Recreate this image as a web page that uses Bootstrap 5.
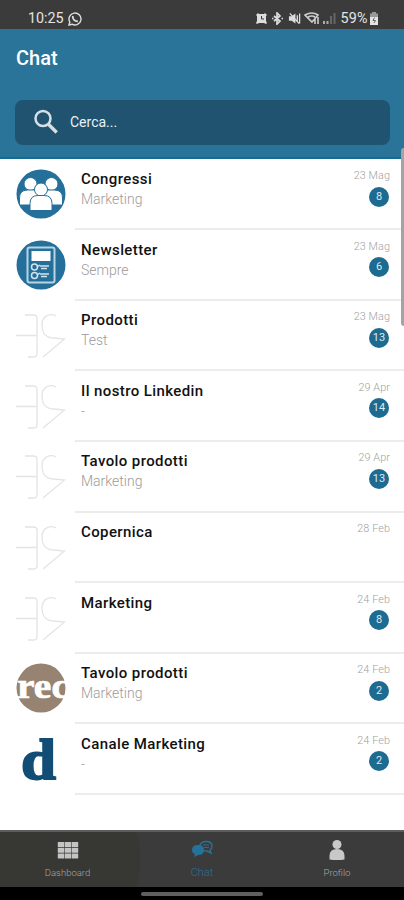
<!DOCTYPE html>
<html lang="it">
<head>
<meta charset="utf-8">
<meta name="viewport" content="width=device-width, initial-scale=1">
<title>Chat</title>
<link rel="stylesheet" href="https://cdn.jsdelivr.net/npm/bootstrap@5.3.0/dist/css/bootstrap.min.css">
<style>
body{font-family:Roboto,"Liberation Sans",sans-serif;width:404px;height:900px;overflow:hidden;background:#fff}
svg{display:block;flex:none}
.statusbar{height:29px;background:#3b3b3b;color:#e4e4e4;padding:8px 25px 0 28px;font-size:14.300px;line-height:20px}
.status-icons{gap:3.300px}
.pct{margin-left:1px;margin-right:-2px;letter-spacing:.2px}
.topbar{height:130.300px;background:#2b7499;border-bottom:2px solid #146b93;padding:15px 14px 0 15px}
.topbar h1{font-size:20px;line-height:28px;font-weight:500;color:#fff;margin:0 0 27.500px 1px}
.searchbox{height:45px;border-radius:8px;background:#1f5370;color:#e9f1f5;font-size:14px;padding-left:18px}
.searchbox span{margin-left:11px}
.chat-row{height:70.550px;padding-left:16px}
.avatar-pic{margin-top:10px}
.avatar-tall{margin-top:0}
.chat-body{margin-left:9px;padding:10px 14px 0 6px;border-bottom:2px solid #ececec;min-width:0;position:relative;top:.5px}
.chat-title{font-size:15px;line-height:20px;font-weight:500;color:#111;letter-spacing:.4px;margin-top:-.5px}
.chat-sub{font-size:14px;line-height:20px;font-weight:300;color:#9b9b9b}
.chat-date{font-size:10.800px;line-height:13px;font-weight:300;color:#9f9f9f;letter-spacing:.1px;margin-top:-.5px}
.count{width:20px;height:20px;border-radius:50%;background:#1d6b91;color:#dceaf2;font-size:11px;line-height:20px;margin:4.500px 1px 0 0}
.scroll-thumb{right:0;top:148px;width:3px;height:178px;border-radius:3px 0 0 3px;background:#a3a3a3}
.tabbar{height:57px;background:#3b3b3b;border-top:2px solid #5c5c5c;color:#a8a8a8;font-size:9.500px;font-weight:300}
.tab-item{padding-top:7px}
.tab-item.first{background:#373733;width:140px;padding-right:5px;border-radius:0 5px 5px 0/0 28px 28px 0}
.tab-item.mid{width:124px;color:#25739b;font-size:11px}
.tab-item.last{width:140px;padding-left:6px}
.tab-item span{line-height:14px;margin-top:5px}
.gesture{height:13px;background:#000}
.gesture div{width:122px;height:4px;border-radius:2px;background:#606060}
</style>
<script src="https://cdn.jsdelivr.net/npm/bootstrap@5.3.0/dist/js/bootstrap.bundle.min.js"></script>
</head>
<body class="d-flex flex-column position-relative">
<svg width="0" height="0" class="position-absolute"><defs>
<symbol id="mono" viewBox="0 0 50 50"><g fill="none" stroke="#e4e4e4" stroke-width="1.300"><path d="M9 5h8q4 0 4 3v36q0 3-4 3h-5M0 25.500h21M40 6C35 3 26 5 26 15C26 25 32 28 38 28L48.500 29 27 47"/></g></symbol>
<g id="person"><circle cy="-9" r="6.500"/><path d="M-11 12V5q0-8 8-8h6q8 0 8 8v7z"/></g>
</defs></svg>

<div class="statusbar d-flex justify-content-between">
<div class="d-flex gap-1"><span>10:25</span>
<svg class="mt-1" width="14" height="14" viewBox="0 0 14 14" fill="none" stroke="#ddd" stroke-width="1.400"><path d="M1 13l.8-3A6 6 0 1 1 4 12.200z"/><path d="M4.800 4c-.5 3 2 5.500 5 5.300" stroke-width="1.900"/></svg></div>
<div class="d-flex status-icons">
<svg class="mt-1" width="13" height="13" viewBox="0 0 13 13"><path d="M1 3l2-2 1 1h5l1-1 2 2-1 1v5l1 2-1 1-2-1H4l-2 1-1-1 1-2V4z" fill="#ddd"/><path d="M6.500 4v3h2.500" fill="none" stroke="#3b3b3b"/></svg>
<svg class="mt-1" width="13" height="13" viewBox="0 0 13 13" fill="none" stroke="#ddd" stroke-width="1.700"><path d="M3 4l6 5-3 3V1l3 3-6 5M1 6.500h1.500M10.500 6.500H12"/></svg>
<svg class="mt-1" width="13" height="13" viewBox="0 0 14 13"><path d="M1 4h3l4-3v11L4 9H1z" fill="#ddd"/><path d="M10 3v7M12.500 1v11M2 1l10 11" stroke="#ddd" stroke-width="1.400"/></svg>
<svg class="mt-1" width="16" height="13" viewBox="0 0 16 13" fill="none" stroke="#ccc" stroke-width="1.600"><path d="M1 3q7-4 13 0l-6 7zM4 5q4-2 7 0M11 5v7M14 12V5"/></svg>
<svg class="mt-1" width="13" height="13" viewBox="0 0 13 13" fill="#666"><path d="M0 9h2v3H0zM3.500 9h2v3h-2z" fill="#aaa"/><path d="M7 4h2v8H7zM10.500 1h2v11h-2z"/></svg>
<span class="pct">59%</span>
<svg class="mt-1" width="10" height="13" viewBox="0 0 10 13"><path d="M3 0h4v1.500h2V5H1V1.500h2z" fill="#999"/><path d="M1 5h8v8H1z" fill="#e4e4e4"/><path d="M5.500 5.500L4 8.500h2.500L5 11" fill="none" stroke="#666"/></svg>
</div></div>

<header class="topbar"><h1>Chat</h1>
<div class="searchbox d-flex align-items-center"><svg width="26" height="26" viewBox="0 0 26 26" fill="none" stroke="#d5e0e6"><circle cx="10" cy="9.500" r="7.500" stroke-width="2.500"/><path d="M15.200 15l8.500 8.500" stroke-width="3.400"/></svg><span>Cerca...</span></div>
</header>

<main class="flex-grow-1">
<div class="chat-row d-flex"><svg class="avatar-pic" width="50" height="50" viewBox="0 0 50 50"><circle cx="25" cy="25" r="24.500" fill="#25709a"/><g fill="#fff" stroke="#25709a"><use href="#person" x="14.500" y="24"/><use href="#person" x="35.500" y="24"/><use href="#person" x="25" y="29.500"/></g></svg>
<div class="chat-body flex-grow-1 d-flex justify-content-between"><div><div class="chat-title">Congressi</div><div class="chat-sub">Marketing</div></div><div class="d-flex flex-column align-items-end"><span class="chat-date">23 Mag</span><span class="count text-center">8</span></div></div></div>

<div class="chat-row d-flex"><svg class="avatar-pic" width="50" height="50" viewBox="0 0 50 50"><circle cx="25" cy="25" r="24.500" fill="#25709a"/><rect x="11.500" y="7.500" width="27" height="35" rx="2" fill="none" stroke="#b9d3e2" stroke-width="2"/><path d="M15.500 11h19v10h-19z" fill="#fff"/><g fill="none" stroke="#d3e4ee" stroke-width="1.500"><circle cx="18.500" cy="27" r="3"/><circle cx="18.500" cy="35.500" r="3"/><path d="M21 27l3-2M21 35l3-2M24 26h9M25 28.500h6M24 34h9M25 36.500h6"/></g></svg>
<div class="chat-body flex-grow-1 d-flex justify-content-between"><div><div class="chat-title">Newsletter</div><div class="chat-sub">Sempre</div></div><div class="d-flex flex-column align-items-end"><span class="chat-date">23 Mag</span><span class="count text-center">6</span></div></div></div>

<div class="chat-row d-flex"><svg class="avatar-pic" width="50" height="50"><use href="#mono"/></svg>
<div class="chat-body flex-grow-1 d-flex justify-content-between"><div><div class="chat-title">Prodotti</div><div class="chat-sub">Test</div></div><div class="d-flex flex-column align-items-end"><span class="chat-date">23 Mag</span><span class="count text-center">13</span></div></div></div>

<div class="chat-row d-flex"><svg class="avatar-pic" width="50" height="50"><use href="#mono"/></svg>
<div class="chat-body flex-grow-1 d-flex justify-content-between"><div><div class="chat-title">Il nostro Linkedin</div><div class="chat-sub">-</div></div><div class="d-flex flex-column align-items-end"><span class="chat-date">29 Apr</span><span class="count text-center">14</span></div></div></div>

<div class="chat-row d-flex"><svg class="avatar-pic" width="50" height="50"><use href="#mono"/></svg>
<div class="chat-body flex-grow-1 d-flex justify-content-between"><div><div class="chat-title">Tavolo prodotti</div><div class="chat-sub">Marketing</div></div><div class="d-flex flex-column align-items-end"><span class="chat-date">29 Apr</span><span class="count text-center">13</span></div></div></div>

<div class="chat-row d-flex"><svg class="avatar-pic" width="50" height="50"><use href="#mono"/></svg>
<div class="chat-body flex-grow-1 d-flex justify-content-between"><div><div class="chat-title">Copernica</div></div><div class="d-flex flex-column align-items-end"><span class="chat-date">28 Feb</span></div></div></div>

<div class="chat-row d-flex"><svg class="avatar-pic" width="50" height="50"><use href="#mono"/></svg>
<div class="chat-body flex-grow-1 d-flex justify-content-between"><div><div class="chat-title">Marketing</div></div><div class="d-flex flex-column align-items-end"><span class="chat-date">24 Feb</span><span class="count text-center">8</span></div></div></div>

<div class="chat-row d-flex"><svg class="avatar-pic" width="50" height="50" viewBox="0 0 50 50"><circle cx="25" cy="25" r="24.500" fill="#968372"/><text x="1" y="35" font-family="Liberation Serif,serif" font-weight="700" font-size="36" textLength="52" lengthAdjust="spacingAndGlyphs" fill="#fff" stroke="#fff" stroke-width=".7">rec</text></svg>
<div class="chat-body flex-grow-1 d-flex justify-content-between"><div><div class="chat-title">Tavolo prodotti</div><div class="chat-sub">Marketing</div></div><div class="d-flex flex-column align-items-end"><span class="chat-date">24 Feb</span><span class="count text-center">2</span></div></div></div>

<div class="chat-row d-flex"><svg class="avatar-tall" width="50" height="70" viewBox="0 0 50 70"><text x="5" y="54.500" font-family="Liberation Serif,serif" font-weight="700" font-size="56" textLength="35" lengthAdjust="spacingAndGlyphs" fill="#124d75" stroke="#124d75" stroke-width="1.800">d</text></svg>
<div class="chat-body flex-grow-1 d-flex justify-content-between"><div><div class="chat-title">Canale Marketing</div><div class="chat-sub">-</div></div><div class="d-flex flex-column align-items-end"><span class="chat-date">24 Feb</span><span class="count text-center">2</span></div></div></div>
</main>

<nav class="tabbar d-flex">
<div class="tab-item first d-flex flex-column align-items-center"><svg width="22" height="22" viewBox="0 0 22 22" fill="#c4c4c4"><path d="M.8 3h6.400v5H.8zM7.800 3h6.400v5H7.800zM14.800 3h6.400v5h-6.400zM.8 8.800h6.400v5H.8zM7.800 8.800h6.400v5H7.800zM14.800 8.800h6.400v5h-6.400zM.8 14.600h6.400v5H.8zM7.800 14.600h6.400v5H7.800zM14.800 14.600h6.400v5h-6.400z"/></svg><span>Dashboard</span></div>
<div class="tab-item mid d-flex flex-column align-items-center"><svg width="22" height="22" viewBox="0 0 22 22"><path d="M9 6q2-4 7-3.500 5 .5 5 4.500 0 3-2 4l1 3-4-2q-5 0-6-2z" fill="none" stroke="#25739b" stroke-width="1.400"/><path d="M12 6h6M13 8.500h5" stroke="#25739b"/><path d="M7 6q6 0 6 5t-6 5l-4 2 1-3q-3-1-3-4 0-5 6-5z" fill="#25739b"/></svg><span>Chat</span></div>
<div class="tab-item last d-flex flex-column align-items-center"><svg width="22" height="22" viewBox="0 0 22 22" fill="#c8c8c8"><circle cx="11" cy="5.500" r="4.500"/><path d="M3.500 20.500V17q0-7 7.500-7t7.500 7v3.500q-7.500 1-15 0z"/></svg><span>Profilo</span></div>
</nav>
<div class="gesture d-flex align-items-center justify-content-center"><div></div></div>
<div class="scroll-thumb position-absolute"></div>
</body></html>
